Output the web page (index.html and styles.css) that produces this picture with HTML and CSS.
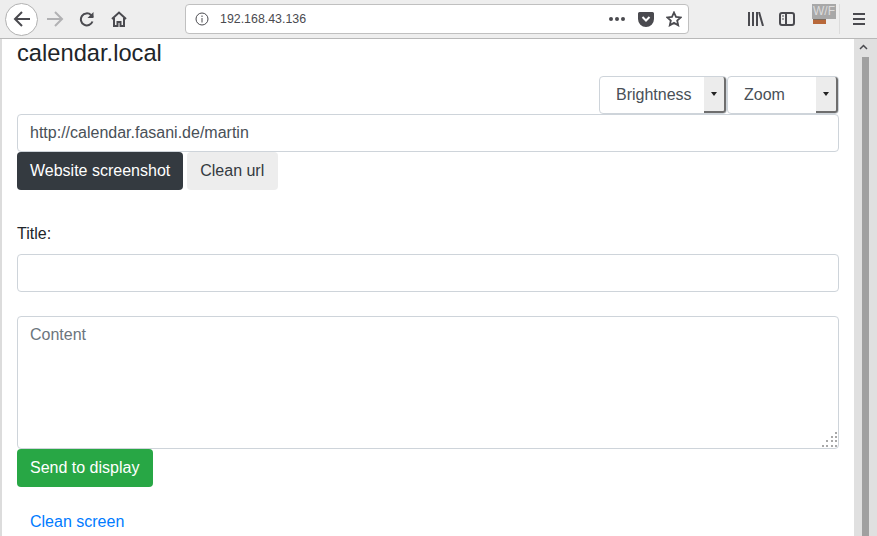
FILE: index.html
```html
<!DOCTYPE html>
<html lang="en">
<head>
    <meta charset="UTF-8">
    <title>calendar.local</title>
    <link rel="stylesheet" href="styles.css">
</head>
<body>

    <div class="toolbar">
        <div class="nav">
            <span class="back">
                <svg width="18" height="18" viewBox="0 0 18 18" fill="none" stroke="#4a4a4f" stroke-width="2"><path d="M17 9H2M9 2L2 9l7 7"/></svg>
            </span>
            <svg class="forward" width="18" height="18" viewBox="0 0 18 18" fill="none" stroke="#b1b1b3" stroke-width="2"><path d="M1 9h15M9 2l7 7-7 7"/></svg>
            <svg class="reload" width="16" height="16" viewBox="0 0 16 16" fill="none" stroke="#4a4a4f" stroke-width="2"><path d="M13.5 10.5A6 6 0 1 1 12 4l2 2"/><path d="M14.5 1v6h-6" fill="#4a4a4f" stroke="none"/></svg>
            <svg class="home" width="16" height="16" viewBox="0 0 16 16" fill="none" stroke="#4a4a4f" stroke-width="2"><path d="M1 8l7-6.500L15 8"/><path d="M3 7v8h3.500v-4h3v4H13V7"/></svg>
        </div>
        <div class="urlbar">
            <svg class="info" width="14" height="14" viewBox="0 0 14 14" fill="none" stroke="#4a4a4f"><circle cx="7" cy="7" r="6"/><path d="M7 6v4.500M7 3.500v1.500"/></svg>
            <span class="address">192.168.43.136</span>
            <span class="dots"><i></i><i></i><i></i></span>
            <svg class="pocket" width="16" height="15" viewBox="0 0 16 15"><path d="M1.500 0h13A1.500 1.500 0 0 1 16 1.500V7A8 8 0 0 1 0 7V1.500A1.500 1.500 0 0 1 1.500 0z" fill="#4a4a4f"/><path d="M4.500 5L8 8.500 11.500 5" fill="none" stroke="#fff" stroke-width="2"/></svg>
            <svg class="star" width="16" height="16" viewBox="0 0 16 16" fill="none" stroke="#4a4a4f" stroke-width="1.800"><path d="M8 1.500l2 4.400 4.700.5-3.500 3.200 1 4.700L8 11.900l-4.200 2.400 1-4.700-3.500-3.200 4.700-.5z"/></svg>
        </div>
        <div class="tools">
            <svg class="library" width="16" height="14" viewBox="0 0 16 14" fill="none" stroke="#4a4a4f" stroke-width="2"><path d="M1 0v14M5 0v14M9 0v14M11 0l4 14" /></svg>
            <svg class="sidebar" width="16" height="14" viewBox="0 0 16 14" fill="none" stroke="#4a4a4f" stroke-width="2"><rect x="1" y="1" width="14" height="12" rx="2"/><path d="M7 1v12"/><path d="M3 4h2M3 7h2" stroke-width="1"/></svg>
            <span class="wf">
                <span class="wf-box"></span>
                <span class="wf-label">W/F</span>
            </span>
            <span class="divider"></span>
            <svg class="menu" width="14" height="12" viewBox="0 0 14 12" fill="none" stroke="#4a4a4f" stroke-width="2"><path d="M1 1h12M1 6h12M1 11h12"/></svg>
        </div>
    </div>

    <div class="viewport">
        <div class="page">
            <h1>calendar.local</h1>
            <div class="selects">
                <div class="select select-brightness">
                    <span>Brightness</span>
                    <span class="arrow"></span>
                </div>
                <div class="select select-zoom">
                    <span>Zoom</span>
                    <span class="arrow"></span>
                </div>
            </div>
            <input class="field" type="text" value="http://calendar.fasani.de/martin">
            <div class="btn-row">
                <a class="btn btn-dark">Website screenshot</a>
                <a class="btn btn-light">Clean url</a>
            </div>
            <label class="title-label">Title:</label>
            <input class="field" type="text">
            <div class="content-box">
                <span class="placeholder">Content</span>
                <svg class="grip" width="18" height="18" viewBox="0 0 18 18" fill="#a8a8a8"><rect x="15" y="2" width="2" height="2"/><rect x="11" y="6" width="2" height="2"/><rect x="15" y="6" width="2" height="2"/><rect x="6" y="10" width="2" height="2"/><rect x="11" y="10" width="2" height="2"/><rect x="15" y="10" width="2" height="2"/><rect x="2" y="15" width="2" height="2"/><rect x="6" y="15" width="2" height="2"/><rect x="11" y="15" width="2" height="2"/><rect x="15" y="15" width="2" height="2"/></svg>
            </div>
            <a class="btn btn-green">Send to display</a>
            <a class="btn btn-link">Clean screen</a>
        </div>
        <div class="scrollbar">
            <svg class="scroll-up" width="9" height="6" viewBox="0 0 9 6" fill="none" stroke="#4a4a4f" stroke-width="1.500"><path d="M1 5l3.500-3.500L8 5"/></svg>
            <div class="thumb"></div>
        </div>
    </div>

</body>
</html>
```

FILE: styles.css
```css
html, body {
    margin: 0;
    padding: 0;
    height: 100%;
    overflow: hidden;
}

body {
    font-family: "Liberation Sans", Arial, sans-serif;
    font-size: 16px;
    color: #212529;
    background: white;
    display: flex;
    flex-direction: column;
}

/* browser chrome */
.toolbar {
    height: 38px;
    flex: none;
    display: flex;
    align-items: center;
    background: #eeeeee;
    border-bottom: 1px solid #b8b8b8;
}

.nav {
    width: 185px;
    flex: none;
    display: flex;
    align-items: center;
    padding-left: 5px;
    box-sizing: border-box;
}

.back {
    width: 33px;
    height: 33px;
    flex: none;
    display: flex;
    align-items: center;
    justify-content: center;
    box-sizing: border-box;
    border: 1px solid #b1b1b1;
    border-radius: 50%;
    background: white;
}

.forward {
    margin-left: 8px;
}

.reload {
    margin-left: 15px;
}

.home {
    margin-left: 16px;
}

.urlbar {
    width: 504px;
    height: 30px;
    flex: none;
    display: flex;
    align-items: center;
    box-sizing: border-box;
    padding: 0 6px 0 9px;
    background: white;
    border: 1px solid #c0c0c0;
    border-radius: 4px;
}

.address {
    margin-left: 11px;
    font-size: 12.4px;
    color: #4a4a4f;
    flex: 1;
}

.dots {
    display: flex;
    gap: 2px;
}

.dots i {
    width: 4px;
    height: 4px;
    border-radius: 50%;
    background: #4a4a4f;
}

.pocket {
    margin-left: 13px;
}

.star {
    margin-left: 12px;
}

.tools {
    flex: 1;
    display: flex;
    align-items: center;
    padding-left: 59px;
}

.sidebar {
    margin-left: 15px;
}

.wf {
    position: relative;
    width: 24px;
    height: 20px;
    margin: -10px 0 0 17px;
}

.wf-box {
    position: absolute;
    left: 1px;
    top: 15px;
    width: 13px;
    height: 5px;
    background: #b8683a;
    border-top: 1px solid #7d6a5c;
    box-sizing: border-box;
}

.wf-label {
    position: absolute;
    left: 0;
    top: 0;
    width: 24px;
    height: 15px;
    background: #a8a8a8;
    color: #dcdcdc;
    font-size: 12px;
    line-height: 15px;
    text-align: center;
}

.divider {
    width: 1px;
    height: 30px;
    margin-left: 3px;
    background: #dcdcdc;
}

.menu {
    margin-left: 12px;
}

/* page */
.viewport {
    flex: 1;
    display: flex;
    min-height: 0;
}

.page {
    flex: 1;
    box-sizing: border-box;
    padding: 0 15px;
    border-left: 2px solid #dcdcdc;
}

h1 {
    margin: 0;
    height: 37px;
    font-size: 23.7px;
    font-weight: 400;
    line-height: 28px;
}

.selects {
    display: flex;
    justify-content: flex-end;
}

.select {
    height: 38px;
    display: flex;
    align-items: center;
    justify-content: space-between;
    box-sizing: border-box;
    background: white;
    border: 1px solid #ced4da;
    border-radius: 4px;
    color: #495057;
    padding-left: 16px;
}

.select-brightness {
    width: 128px;
}

.select-zoom {
    width: 112px;
}

.arrow {
    width: 22px;
    height: 36px;
    box-sizing: border-box;
    background: #ececec;
    border-right: 2px solid #6e6e6e;
    border-bottom: 2px solid #6e6e6e;
    border-radius: 0 3px 3px 0;
    display: flex;
    align-items: center;
    justify-content: center;
}

.arrow::after {
    content: "";
    border-top: 4px solid #222;
    border-left: 3.5px solid transparent;
    border-right: 3.5px solid transparent;
}

.field {
    display: block;
    width: 100%;
    height: 38px;
    box-sizing: border-box;
    padding: 6px 12px;
    font-family: inherit;
    font-size: 16px;
    color: #495057;
    background: white;
    border: 1px solid #ced4da;
    border-radius: 4px;
}

.btn-row {
    display: flex;
    gap: 4px;
}

.btn {
    display: inline-block;
    height: 38px;
    box-sizing: border-box;
    padding: 0 12px;
    line-height: 36px;
    white-space: nowrap;
    border: 1px solid transparent;
    border-radius: 4px;
}

.btn-dark {
    background: #343a40;
    color: white;
}

.btn-light {
    background: #ededed;
    color: #343a40;
    padding-right: 13px;
}

.title-label {
    display: block;
    margin: 33px 0 9px;
    line-height: 22px;
    height: 22px;
}

.content-box {
    position: relative;
    height: 133px;
    margin-top: 24px;
    box-sizing: border-box;
    padding: 6px 12px;
    line-height: 24px;
    border: 1px solid #ced4da;
    border-radius: 4px;
}

.placeholder {
    color: #6c757d;
}

.grip {
    position: absolute;
    right: 0;
    bottom: 0;
}

.btn-green {
    display: block;
    width: 136px;
    background: #28a745;
    color: white;
}

.btn-link {
    display: block;
    margin-top: 16px;
    color: #007bff;
}

.scrollbar {
    width: 23px;
    flex: none;
    position: relative;
    background: #e0e0e0;
}

.scroll-up {
    position: absolute;
    left: 5px;
    top: 5px;
}

.thumb {
    position: absolute;
    left: 8px;
    top: 18px;
    bottom: 0;
    width: 7px;
    background: #a0a0a0;
}
```
